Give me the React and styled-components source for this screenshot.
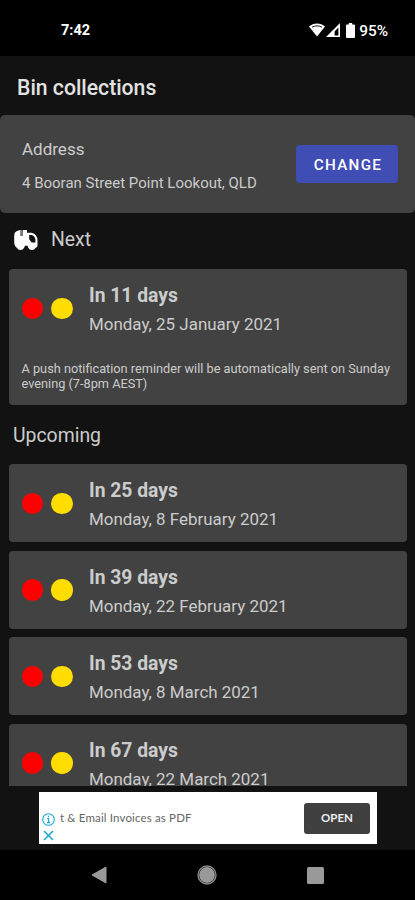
import React from 'react'
import styled, { createGlobalStyle } from 'styled-components'

const upcoming = [
  { days: 'In 25 days', date: 'Monday, 8 February 2021' },
  { days: 'In 39 days', date: 'Monday, 22 February 2021' },
  { days: 'In 53 days', date: 'Monday, 8 March 2021' },
  { days: 'In 67 days', date: 'Monday, 22 March 2021' },
]

function Collection ({ days, date }) {
  return (
    <CollectionRow>
      <Bins>
        <Bin $color="#ff0000"/>
        <Bin $color="#ffdd00"/>
      </Bins>
      <div>
        <Days>{days}</Days>
        <DateText>{date}</DateText>
      </div>
    </CollectionRow>
  )
}

function App () {
  return (
    <Screen>
      <GlobalStyle/>
      <StatusBar>
        <Clock>7:42</Clock>
        <StatusIcons>
          <svg width="16" height="14" viewBox="0 0 16 14">
            <path d="M0 3.6C4.4-.6 11.6-.6 16 3.6L8 13.6z" fill="#fff"/>
            <path d="M3 4.2C6 2.4 10 2.4 13 4.2" fill="none" stroke="#000" strokeWidth=".9"/>
          </svg>
          <svg width="14" height="14" viewBox="0 0 14 14">
            <path fillRule="evenodd" d="M0 14L14 0V14zM8.6 12.4H12.4V4.6L8.6 8.4z" fill="#fff"/>
          </svg>
          <Battery width="9" height="15" viewBox="0 0 9 15">
            <path d="M2.8 0h3.4v1.4H8q1 0 1 1V14q0 1-1 1H1q-1 0-1-1V2.4q0-1 1-1h1.8z" fill="#fff"/>
          </Battery>
          <Percent>95%</Percent>
        </StatusIcons>
      </StatusBar>

      <Header>
        <Title>Bin collections</Title>
      </Header>

      <AddressCard>
        <div>
          <AddressLabel>Address</AddressLabel>
          <AddressText>4 Booran Street Point Lookout, QLD</AddressText>
        </div>
        <ChangeButton>CHANGE</ChangeButton>
      </AddressCard>

      <Content>
        <NextHeading>
          <svg width="24" height="20" viewBox="0 0 24 20">
            <path fillRule="evenodd" d="M2.5 1.2L6 0H13V2.8H17.5Q23.5 4.5 23.5 10.5V15.5Q23.5 17.4 21.6 17.8Q20.5 20 18 20T14.2 17.8L13.6 15.8H11L10 18Q9 20 6.4 20T2.8 17.8Q.2 16 .2 11.5V5.5Q.2 2.2 2.5 1.2zM15.2 5V9.2L17.6 12.6H21.4V9.5Q20.6 5.6 17.6 5z" fill="#fff"/>
            <path d="M6.2 0H9V6H6.2z" fill="#777"/>
          </svg>
          <Heading>Next</Heading>
        </NextHeading>

        <Card>
          <Collection days="In 11 days" date="Monday, 25 January 2021"/>
          <Reminder>
            A push notification reminder will be automatically sent on Sunday<br/>
            evening (7-8pm AEST)
          </Reminder>
        </Card>

        <UpcomingHeading>
          <Heading>Upcoming</Heading>
        </UpcomingHeading>

        <List>
          {upcoming.map((item) => (
            <Card key={item.days}>
              <Collection days={item.days} date={item.date}/>
            </Card>
          ))}
        </List>
      </Content>

      <AdSlot>
        <Ad>
          <AdChoices>
            <svg width="13" height="13" viewBox="0 0 13 13" fill="none" stroke="#1ba5d2">
              <circle cx="6.5" cy="6.5" r="5.8" strokeWidth="1.1"/>
              <path d="M5.2 5.6H6.6V9.6M5 9.6H8.2M6.5 2.8V4.2" strokeWidth="1.2"/>
            </svg>
            <svg width="11" height="11" viewBox="0 0 11 11" fill="none" stroke="#1ba5d2">
              <path d="M1 1L10 10M10 1L1 10" strokeWidth="1.5"/>
            </svg>
          </AdChoices>
          <AdText>t &amp; Email Invoices as PDF</AdText>
          <OpenButton>OPEN</OpenButton>
        </Ad>
      </AdSlot>

      <NavBar>
        <svg width="16" height="18" viewBox="0 0 16 18">
          <path d="M15 1V17L1 9z" fill="#999" stroke="#999" strokeLinejoin="round"/>
        </svg>
        <svg width="20" height="20" viewBox="0 0 20 20">
          <circle cx="10" cy="10" r="9" fill="none" stroke="#888" strokeWidth="1.4"/>
          <circle cx="10" cy="10" r="7.9" fill="#999"/>
        </svg>
        <svg width="17" height="17" viewBox="0 0 17 17">
          <rect width="17" height="17" rx="1.5" fill="#999"/>
        </svg>
      </NavBar>
    </Screen>
  )
}

const GlobalStyle = createGlobalStyle`
  * {
    box-sizing: border-box;
  }
  body {
    margin: 0;
    background: #000;
  }
  svg {
    display: block;
    flex-shrink: 0;
  }
`;
const Screen = styled.div`
  width: 415px;
  height: 900px;
  display: flex;
  flex-direction: column;
  overflow: hidden;
  background: #121212;
  color: #ccc;
  font-family: Roboto, sans-serif;
`;
const StatusBar = styled.div`
  height: 56px;
  flex-shrink: 0;
  padding: 5px 27px 0 61px;
  display: flex;
  align-items: center;
  justify-content: space-between;
  background: #000;
  color: #fff;
`;
const Clock = styled.span`
  font-size: 14.5px;
  font-weight: 700;
`;
const StatusIcons = styled.div`
  display: flex;
  align-items: center;
  gap: 1px;
  padding-bottom: 1px;
`;
const Battery = styled.svg`
  margin: 0 3px 0 5px;
`;
const Percent = styled.span`
  font-size: 15.4px;
  font-weight: 500;
  padding-top: 1px;
`;
const Header = styled.header`
  height: 59px;
  flex-shrink: 0;
  padding: 3px 17px 0;
  display: flex;
  align-items: center;
`;
const Title = styled.h1`
  margin: 0;
  font-size: 21.2px;
  font-weight: 500;
  color: #e2e2e2;
`;
const AddressCard = styled.section`
  height: 98px;
  flex-shrink: 0;
  padding: 0 17px 0 22px;
  display: flex;
  align-items: center;
  justify-content: space-between;
  border-radius: 5px;
  background: #424242;
`;
const AddressLabel = styled.div`
  padding-top: 3px;
  font-size: 17px;
  line-height: 34px;
`;
const AddressText = styled.div`
  font-size: 15px;
  line-height: 34px;
  white-space: nowrap;
`;
const ChangeButton = styled.button`
  width: 102px;
  height: 38px;
  padding: 1px 0 0 2px;
  border: 0;
  border-radius: 4px;
  background: #3f4db5;
  color: #fff;
  font: 500 15.2px Roboto, sans-serif;
  letter-spacing: 1.3px;
`;
const Content = styled.main`
  height: 573px;
  flex-shrink: 0;
  padding: 0 8px 0 9px;
  overflow: hidden;
`;
const NextHeading = styled.div`
  height: 56px;
  padding: 0 0 3px 5px;
  display: flex;
  align-items: center;
  gap: 13px;
`;
const Heading = styled.h2`
  margin: 0;
  font-size: 19.4px;
  font-weight: 400;
`;
const Card = styled.section`
  padding: 13px 12.5px 0;
  min-height: 78px;
  border-radius: 4px;
  background: #424242;
`;
const CollectionRow = styled.div`
  display: flex;
  align-items: center;
  gap: 16.5px;
`;
const Bins = styled.div`
  display: flex;
  gap: 8px;
  padding-bottom: 3.5px;
`;
const Bin = styled.span`
  width: 21.5px;
  height: 21.5px;
  border-radius: 50%;
  background: ${props => props.$color};
`;
const Days = styled.div`
  font-size: 19.3px;
  font-weight: 700;
  line-height: 28px;
`;
const DateText = styled.div`
  font-size: 16.95px;
  line-height: 28px;
`;
const Reminder = styled.p`
  margin: 0;
  padding: 23px 0 14px;
  font-size: 12.74px;
  line-height: 15px;
  white-space: nowrap;
`;
const UpcomingHeading = styled.div`
  height: 59px;
  padding: 2px 0 0 4px;
  display: flex;
  align-items: center;
`;
const List = styled.div`
  display: flex;
  flex-direction: column;
  gap: 8.5px;
`;
const AdSlot = styled.div`
  height: 64px;
  flex-shrink: 0;
  padding: 6px 38px 0 39px;
`;
const Ad = styled.div`
  height: 52px;
  padding: 0 7px 0 3px;
  display: flex;
  align-items: center;
  background: #fff;
`;
const AdChoices = styled.div`
  align-self: flex-end;
  display: flex;
  flex-direction: column;
  align-items: center;
  gap: 4px;
  padding-bottom: 3px;
`;
const AdText = styled.span`
  margin-left: 5px;
  padding-bottom: 2px;
  flex: 1;
  font: 400 11.5px Lato, sans-serif;
  letter-spacing: 0.15px;
  color: #666;
`;
const OpenButton = styled.button`
  width: 66px;
  height: 31px;
  padding: 0 0 1px;
  border: 0;
  border-radius: 3px;
  background: #404040;
  color: #eee;
  font: 700 11.5px Lato, sans-serif;
`;
const NavBar = styled.nav`
  height: 50px;
  flex-shrink: 0;
  padding: 0 91px 0 91px;
  display: flex;
  align-items: center;
  justify-content: space-between;
  background: #000;
`;

export default App;
